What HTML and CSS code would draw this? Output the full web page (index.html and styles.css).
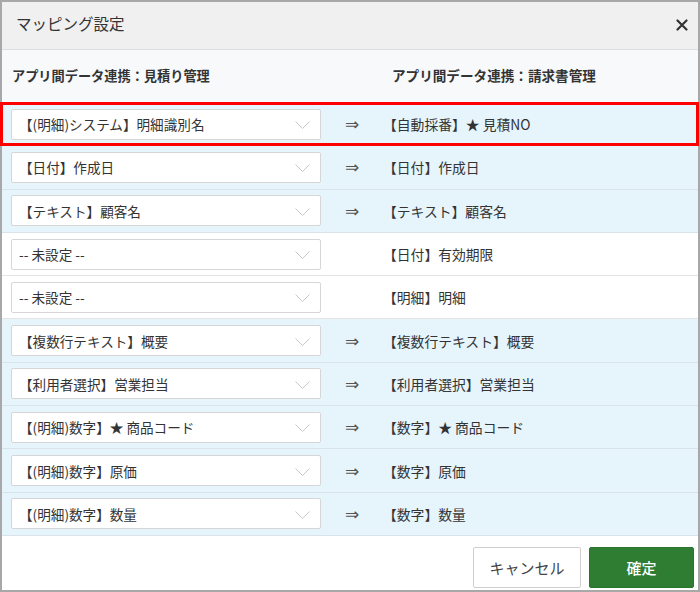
FILE: index.html
```html
<!DOCTYPE html>
<html lang="ja">
<head>
<meta charset="utf-8">
<link rel="stylesheet" href="styles.css">
</head>
<body>
<div class="dialog">
  <div class="head">
    <span class="title">マッピング設定</span>
    <svg class="close" width="12" height="12" viewBox="0 0 12 12"><path d="M1.5 1.5 L10.5 10.5 M10.5 1.5 L1.5 10.5" stroke="#333" stroke-width="2.2" stroke-linecap="round"/></svg>
  </div>
  <div class="colhead">
    <div class="ch-left">アプリ間データ連携：見積り管理</div>
    <div class="ch-right">アプリ間データ連携：請求書管理</div>
  </div>
  <div class="rows">
    <div class="row mapped hl">
      <div class="sel"><span>【(明細)システム】明細識別名</span><svg class="chev" width="15" height="8" viewBox="0 0 15 8"><path d="M0.5 0.5 L7.5 7.5 L14.5 0.5" fill="none" stroke="#c8c8c8" stroke-width="1"/></svg></div>
      <div class="arrow">⇒</div>
      <div class="target">【自動採番】★ 見積NO</div>
    </div>
    <div class="row mapped">
      <div class="sel"><span>【日付】作成日</span><svg class="chev" width="15" height="8" viewBox="0 0 15 8"><path d="M0.5 0.5 L7.5 7.5 L14.5 0.5" fill="none" stroke="#c8c8c8" stroke-width="1"/></svg></div>
      <div class="arrow">⇒</div>
      <div class="target">【日付】作成日</div>
    </div>
    <div class="row mapped">
      <div class="sel"><span>【テキスト】顧客名</span><svg class="chev" width="15" height="8" viewBox="0 0 15 8"><path d="M0.5 0.5 L7.5 7.5 L14.5 0.5" fill="none" stroke="#c8c8c8" stroke-width="1"/></svg></div>
      <div class="arrow">⇒</div>
      <div class="target">【テキスト】顧客名</div>
    </div>
    <div class="row">
      <div class="sel"><span>-- 未設定 --</span><svg class="chev" width="15" height="8" viewBox="0 0 15 8"><path d="M0.5 0.5 L7.5 7.5 L14.5 0.5" fill="none" stroke="#c8c8c8" stroke-width="1"/></svg></div>
      <div class="arrow"></div>
      <div class="target">【日付】有効期限</div>
    </div>
    <div class="row">
      <div class="sel"><span>-- 未設定 --</span><svg class="chev" width="15" height="8" viewBox="0 0 15 8"><path d="M0.5 0.5 L7.5 7.5 L14.5 0.5" fill="none" stroke="#c8c8c8" stroke-width="1"/></svg></div>
      <div class="arrow"></div>
      <div class="target">【明細】明細</div>
    </div>
    <div class="row mapped">
      <div class="sel"><span>【複数行テキスト】概要</span><svg class="chev" width="15" height="8" viewBox="0 0 15 8"><path d="M0.5 0.5 L7.5 7.5 L14.5 0.5" fill="none" stroke="#c8c8c8" stroke-width="1"/></svg></div>
      <div class="arrow">⇒</div>
      <div class="target">【複数行テキスト】概要</div>
    </div>
    <div class="row mapped">
      <div class="sel"><span>【利用者選択】営業担当</span><svg class="chev" width="15" height="8" viewBox="0 0 15 8"><path d="M0.5 0.5 L7.5 7.5 L14.5 0.5" fill="none" stroke="#c8c8c8" stroke-width="1"/></svg></div>
      <div class="arrow">⇒</div>
      <div class="target">【利用者選択】営業担当</div>
    </div>
    <div class="row mapped">
      <div class="sel"><span>【(明細)数字】★ 商品コード</span><svg class="chev" width="15" height="8" viewBox="0 0 15 8"><path d="M0.5 0.5 L7.5 7.5 L14.5 0.5" fill="none" stroke="#c8c8c8" stroke-width="1"/></svg></div>
      <div class="arrow">⇒</div>
      <div class="target">【数字】★ 商品コード</div>
    </div>
    <div class="row mapped">
      <div class="sel"><span>【(明細)数字】原価</span><svg class="chev" width="15" height="8" viewBox="0 0 15 8"><path d="M0.5 0.5 L7.5 7.5 L14.5 0.5" fill="none" stroke="#c8c8c8" stroke-width="1"/></svg></div>
      <div class="arrow">⇒</div>
      <div class="target">【数字】原価</div>
    </div>
    <div class="row mapped">
      <div class="sel"><span>【(明細)数字】数量</span><svg class="chev" width="15" height="8" viewBox="0 0 15 8"><path d="M0.5 0.5 L7.5 7.5 L14.5 0.5" fill="none" stroke="#c8c8c8" stroke-width="1"/></svg></div>
      <div class="arrow">⇒</div>
      <div class="target">【数字】数量</div>
    </div>
  </div>
  <div class="foot">
    <button class="btn cancel">キャンセル</button>
    <button class="btn ok">確定</button>
  </div>
</div>
</body>
</html>
```
FILE: styles.css
```css
html, body {
  margin: 0;
  padding: 0;
  background: #fff;
}
body {
  font-family: "Noto Sans CJK JP", "Noto Sans", sans-serif;
  color: #333;
}
.dialog {
  width: 700px;
  height: 592px;
  box-sizing: border-box;
  border: 2px solid #a8a8a8;
  display: flex;
  flex-direction: column;
  background: #fff;
}
.head {
  height: 48px;
  box-sizing: border-box;
  background: #f0f0f0;
  border-bottom: 1px solid #dedede;
  display: flex;
  align-items: center;
  justify-content: space-between;
  padding: 0 10px 0 14px;
}
.title {
  font-size: 15.5px;
  color: #333;
  position: relative;
  top: -3px;
}
.close {
  position: relative;
  top: -1px;
}
.colhead {
  height: 53px;
  box-sizing: border-box;
  background: #f7f9fb;
  display: flex;
  align-items: center;
  font-size: 13.2px;
  font-weight: bold;
  color: #333;
  padding-bottom: 3px;
}
.ch-left {
  width: 390px;
  padding-left: 10px;
  box-sizing: border-box;
}
.ch-right {
  font-size: 13.6px;
}
.rows {
  display: flex;
  flex-direction: column;
}
.row {
  height: 43.3px;
  box-sizing: border-box;
  border-bottom: 1px solid #e4e4e4;
  display: flex;
  align-items: center;
  background: #fff;
  position: relative;
}
.row.mapped {
  background: #e6f4fc;
  border-bottom-color: #d8e3ea;
}
.row.hl::after {
  content: "";
  position: absolute;
  left: -2px;
  right: -1px;
  top: -1px;
  bottom: -1px;
  border: 3px solid #f00;
  pointer-events: none;
}
.sel {
  width: 310px;
  height: 31px;
  box-sizing: border-box;
  margin-left: 9px;
  background: #fff;
  border: 1px solid #d6d6d6;
  border-radius: 2px;
  display: flex;
  align-items: center;
  justify-content: space-between;
  padding: 0 10px 0 7px;
  font-size: 13.6px;
  color: #333;
}
.chev {
  margin-top: 2px;
}
.arrow {
  width: 62px;
  text-align: center;
  font-size: 17px;
  color: #555;
  font-family: "DejaVu Sans", sans-serif;
}
.target {
  font-size: 13.8px;
  color: #333;
}
.foot {
  flex: 1;
  display: flex;
  justify-content: flex-end;
  align-items: flex-end;
  gap: 8px;
  padding: 0 4px 2px 0;
}
.btn {
  height: 41px;
  font-family: "Noto Sans CJK JP", "Noto Sans", sans-serif;
  font-size: 15px;
  border-radius: 2px;
  cursor: pointer;
}
.cancel {
  width: 108px;
  background: #fff;
  border: 1px solid #cfcfcf;
  color: #444;
}
.ok {
  width: 105px;
  background: #2e7d32;
  border: 1px solid #2a7430;
  color: #fff;
  font-weight: 500;
}
```
